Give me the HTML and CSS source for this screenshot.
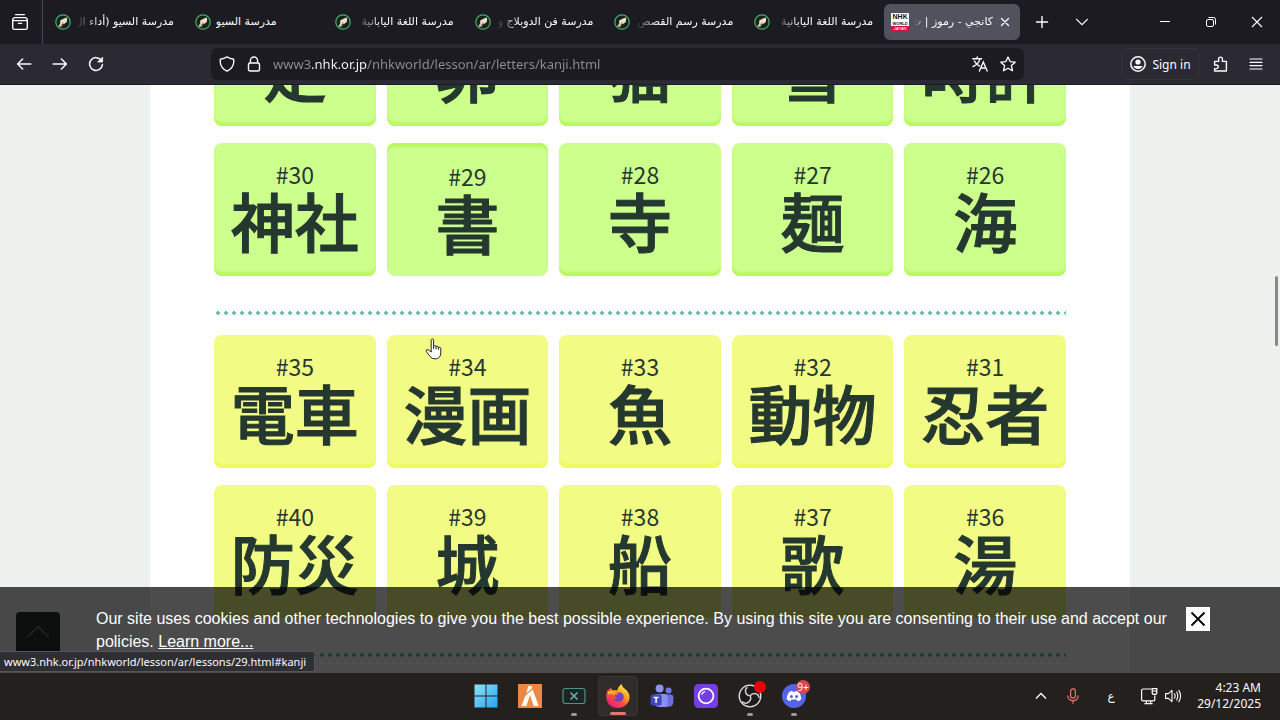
FILE: index.html
```html
<!DOCTYPE html>
<html lang="ar">
<head>
  <meta charset="UTF-8">
  <meta name="viewport" content="width=device-width, initial-scale=1.0">
  <title>كانجي - رموز</title>
  <link rel="stylesheet" href="styles.css">
</head>
<body>

  <!-- Shared icon shapes -->
  <svg class="defs" aria-hidden="true">
    <symbol id="school" viewBox="0 0 16 16">
      <circle cx="8" cy="8" r="7.2" fill="#14251c" stroke="#4fae6a" stroke-width="1.2"/>
      <path d="M11.4 3.4 L12.2 4.6 L11.8 8 L9.4 9.8 L7.4 10.6 L6.4 12.8 L3.2 12.4 L5.2 9.4 L5.2 6.6 L8 5 Z" fill="#f3dfca"/>
      <path d="M5.4 11.4 L7.4 10.4 L8.2 8.4" stroke="#6b5644" stroke-width="0.8" fill="none"/>
    </symbol>
  </svg>

  <header class="tab-bar">
    <button class="view-btn" aria-label="Recent browsing">
      <svg width="18" height="18" viewBox="0 0 18 18" fill="none" stroke="#fbfbfe" stroke-width="1.4" stroke-linecap="round">
        <path d="M4.6 1.6 H13.4 M1.7 7.4 Q1.7 4.6 4 4.6 H14 Q16.3 4.6 16.3 7.4"/>
        <path d="M1.7 7.6 H16.3 V14.8 Q16.3 16.4 14.6 16.4 H3.4 Q1.7 16.4 1.7 14.8 Z M7.4 10.4 H10.6"/>
      </svg>
    </button>
    <nav class="tabs">
      <a class="tab" href="#"><svg class="favicon"><use href="#school"/></svg><span class="tab-title fade">مدرسة السيو (أداء ال</span></a>
      <a class="tab" href="#"><svg class="favicon"><use href="#school"/></svg><span class="tab-title">مدرسة السيو</span></a>
      <a class="tab" href="#"><svg class="favicon"><use href="#school"/></svg><span class="tab-title fade">مدرسة اللغة اليابانية</span></a>
      <a class="tab" href="#"><svg class="favicon"><use href="#school"/></svg><span class="tab-title fade">مدرسة فن الدوبلاج و</span></a>
      <a class="tab" href="#"><svg class="favicon"><use href="#school"/></svg><span class="tab-title fade">مدرسة رسم القصص</span></a>
      <a class="tab" href="#"><svg class="favicon"><use href="#school"/></svg><span class="tab-title fade">مدرسة اللغة اليابانية</span></a>
      <div class="tab active">
        <span class="nhk"><b>NHK</b><b>WORLD</b><i>JAPAN</i></span>
        <span class="tab-title fade">كانجي - رموز | ت</span>
        <button class="tab-close" aria-label="Close tab">
          <svg width="10" height="10" viewBox="0 0 10 10" stroke="#fbfbfe" stroke-width="1.3" stroke-linecap="round"><path d="M1.5 1.5 L8.5 8.5 M8.5 1.5 L1.5 8.5"/></svg>
        </button>
      </div>
    </nav>
    <button class="bar-btn" aria-label="New tab">
      <svg width="14" height="14" viewBox="0 0 14 14" stroke="#fbfbfe" stroke-width="1.4" stroke-linecap="round"><path d="M7 1.5 V12.5 M1.5 7 H12.5"/></svg>
    </button>
    <button class="bar-btn" aria-label="List all tabs">
      <svg width="14" height="14" viewBox="0 0 14 14" fill="none" stroke="#fbfbfe" stroke-width="1.3" stroke-linecap="round"><path d="M1.6 4.4 L7 9.6 L12.4 4.4"/></svg>
    </button>
    <div class="window-btns">
      <button aria-label="Minimize"><svg width="12" height="12" viewBox="0 0 12 12" stroke="#fff"><path d="M1 5.5 H11"/></svg></button>
      <button aria-label="Restore"><svg width="12" height="12" viewBox="0 0 12 12" fill="none" stroke="#fff"><rect x="1.5" y="3.5" width="7" height="7" rx="1.5"/><path d="M3.5 1.5 H8.6 Q10.5 1.5 10.5 3.4 V8.5"/></svg></button>
      <button aria-label="Close"><svg width="12" height="12" viewBox="0 0 12 12" stroke="#fff" stroke-width="1.1"><path d="M1 1 L11 11 M11 1 L1 11"/></svg></button>
    </div>
  </header>

  <div class="nav-bar">
    <div class="nav-btns">
      <button aria-label="Back"><svg width="16" height="16" viewBox="0 0 16 16" fill="none" stroke="#fbfbfe" stroke-width="1.5" stroke-linecap="round" stroke-linejoin="round"><path d="M14.8 8 H1.6 M6.6 3 L1.6 8 L6.6 13"/></svg></button>
      <button aria-label="Forward"><svg width="16" height="16" viewBox="0 0 16 16" fill="none" stroke="#fbfbfe" stroke-width="1.5" stroke-linecap="round" stroke-linejoin="round"><path d="M1.2 8 H14.4 M9.4 3 L14.4 8 L9.4 13"/></svg></button>
      <button aria-label="Reload"><svg width="16" height="16" viewBox="0 0 16 16" fill="none" stroke="#fbfbfe" stroke-width="1.5" stroke-linecap="round" stroke-linejoin="round"><path d="M13.3 4.4 A6.4 6.4 0 1 0 14.4 8.6"/><path d="M14.6 1.4 V6 H10 Z" fill="#fbfbfe" stroke-width="0.8"/></svg></button>
    </div>
    <div class="url-bar">
      <svg width="16" height="16" viewBox="0 0 16 16" fill="none" stroke="#fbfbfe" stroke-width="1.4" stroke-linejoin="round"><path d="M8 0.9 Q11 2.8 14.7 3.2 V6.5 Q14.2 12.2 8 15.2 Q1.8 12.2 1.3 6.5 V3.2 Q5 2.8 8 0.9 Z"/></svg>
      <svg width="14" height="16" viewBox="0 0 14 16" fill="none" stroke="#fbfbfe" stroke-width="1.4"><rect x="1.5" y="7" width="11" height="8" rx="1.5"/><path d="M3.4 7 V4.6 A3.6 3.6 0 0 1 10.6 4.6 V7"/></svg>
      <input class="url" type="text" aria-label="Address" value="www3.nhk.or.jp/nhkworld/lesson/ar/letters/kanji.html">
      <button aria-label="Translate"><svg width="16" height="16" viewBox="0 0 16 16" fill="none" stroke="#fbfbfe" stroke-width="1.4" stroke-linecap="round"><path d="M0.8 2.8 H9.6 M5.2 1 V2.8 M8 2.8 Q7 7.6 1 10.6 M2.4 5 Q4 8.4 7.4 10 M7.4 15 L11.3 6 L15.2 15 M8.8 12 H13.8"/></svg></button>
      <button aria-label="Bookmark"><svg width="16" height="16" viewBox="0 0 16 16" fill="none" stroke="#fbfbfe" stroke-width="1.3" stroke-linejoin="round"><path d="M8 1 L10.1 5.6 L15.2 6.2 L11.4 9.6 L12.5 14.8 L8 12.2 L3.5 14.8 L4.6 9.6 L0.8 6.2 L5.9 5.6 Z"/></svg></button>
    </div>
    <div class="nav-right">
      <button class="sign-in">
        <svg width="16" height="16" viewBox="0 0 16 16"><circle cx="8" cy="8" r="7.2" fill="none" stroke="#fbfbfe" stroke-width="1.5"/><circle cx="8" cy="6" r="2.6" fill="#fbfbfe"/><path d="M3.4 10 H12.6 Q11.6 13 8 13 Q4.4 13 3.4 10 Z" fill="#fbfbfe"/></svg>
        Sign in
      </button>
      <button aria-label="Extensions"><svg width="16" height="16" viewBox="0 0 16 16" fill="none" stroke="#fbfbfe" stroke-width="1.4" stroke-linejoin="round"><path d="M2.6 5.4 H6.6 V3 A1.9 1.9 0 0 1 10.4 3 V5.4 H14.4 V15 H2.6 V12.6 H4.4 A1.8 1.8 0 0 0 4.4 9 H2.6 Z"/></svg></button>
      <button aria-label="Menu"><svg width="14" height="14" viewBox="0 0 14 14" stroke="#fbfbfe" stroke-width="1.2" stroke-linecap="round"><path d="M1 2 H13 M1 5.3 H13 M1 8.6 H13 M1 12 H13"/></svg></button>
    </div>
  </div>

  <div class="viewport">
    <main class="page">
      <div class="kanji-grid green first">
        <a class="card" href="#"><span class="num">#21</span><span class="kanji">時計</span></a>
        <a class="card" href="#"><span class="num">#22</span><span class="kanji">雪</span></a>
        <a class="card" href="#"><span class="num">#23</span><span class="kanji">猫</span></a>
        <a class="card" href="#"><span class="num">#24</span><span class="kanji">卵</span></a>
        <a class="card" href="#"><span class="num">#25</span><span class="kanji">足</span></a>
        <a class="card" href="#"><span class="num">#26</span><span class="kanji">海</span></a>
        <a class="card" href="#"><span class="num">#27</span><span class="kanji">麺</span></a>
        <a class="card" href="#"><span class="num">#28</span><span class="kanji">寺</span></a>
        <a class="card pressed" href="#"><span class="num">#29</span><span class="kanji">書</span></a>
        <a class="card" href="#"><span class="num">#30</span><span class="kanji">神社</span></a>
      </div>
      <div class="dots"></div>
      <div class="kanji-grid yellow">
        <a class="card" href="#"><span class="num">#31</span><span class="kanji">忍者</span></a>
        <a class="card" href="#"><span class="num">#32</span><span class="kanji">動物</span></a>
        <a class="card" href="#"><span class="num">#33</span><span class="kanji">魚</span></a>
        <a class="card" href="#"><span class="num">#34</span><span class="kanji">漫画</span></a>
        <a class="card" href="#"><span class="num">#35</span><span class="kanji">電車</span></a>
        <a class="card" href="#"><span class="num">#36</span><span class="kanji">湯</span></a>
        <a class="card" href="#"><span class="num">#37</span><span class="kanji">歌</span></a>
        <a class="card" href="#"><span class="num">#38</span><span class="kanji">船</span></a>
        <a class="card" href="#"><span class="num">#39</span><span class="kanji">城</span></a>
        <a class="card" href="#"><span class="num">#40</span><span class="kanji">防災</span></a>
      </div>
      <div class="dots"></div>
    </main>

    <div class="scroll-thumb"></div>

    <button class="to-top" aria-label="Back to top">
      <svg width="24" height="14" viewBox="0 0 24 14" fill="none" stroke="#b4c4b8"><path d="M1 12.5 L12 1.5 L23 12.5"/></svg>
    </button>

    <div class="cookie-bar">
      <p>Our site uses cookies and other technologies to give you the best possible experience. By using this site you are consenting to their use and accept our policies. <a href="#">Learn more...</a></p>
      <button aria-label="Close">
        <svg width="16" height="16" viewBox="0 0 16 16" stroke="#000" stroke-width="1.8"><path d="M1.5 1.5 L14.5 14.5 M14.5 1.5 L1.5 14.5"/></svg>
      </button>
    </div>

    <div class="status">www3.nhk.or.jp/nhkworld/lesson/ar/lessons/29.html#kanji</div>

    <svg class="pointer" width="18" height="22" viewBox="0 0 18 22"><path d="M6.2 14 V2.4 Q6.2 1 7.4 1 Q8.6 1 8.6 2.4 V8 Q9.8 7 10.9 8.4 Q12.2 7.6 13.2 9.2 Q15.6 8.6 15.8 10.8 V15 Q15.6 20.6 10.4 20.9 Q6.8 21 5 18.4 L1.2 13.4 Q0.9 11.4 3 11.6 L6.2 14" fill="#fff" stroke="#222" stroke-width="1"/><path d="M8.6 7.6 V11 M11 8.4 V11.4 M13.3 9.4 V11.8" stroke="#222" fill="none"/></svg>
  </div>

  <footer class="taskbar">
    <div class="apps">
      <button aria-label="Start">
        <svg width="24" height="24" viewBox="0 0 24 24">
          <defs><linearGradient id="win" x1="0" y1="0" x2="1" y2="1"><stop offset="0" stop-color="#8fe2fb"/><stop offset="1" stop-color="#23a5ee"/></linearGradient></defs>
          <path d="M0.5 0.5 H11.5 V11.5 H0.5 Z M12.5 0.5 H23.5 V11.5 H12.5 Z M0.5 12.5 H11.5 V23.5 H0.5 Z M12.5 12.5 H23.5 V23.5 H12.5 Z" fill="url(#win)"/>
        </svg>
      </button>
      <button aria-label="FiveM">
        <svg width="24" height="24" viewBox="0 0 24 24"><rect width="24" height="24" fill="#ee8743"/><path d="M10.2 2 H13.6 L14.2 4 L8.4 9.4 Z M14.6 5.4 L20.8 22 H15.6 L12 11 L8.4 22 H3.4 L7.4 11.8 Z" fill="#fff"/></svg>
      </button>
      <button class="open" aria-label="Terminal">
        <svg width="24" height="24" viewBox="0 0 24 24" fill="none" stroke="#4c9482"><rect x="1" y="4.5" width="22" height="15" rx="2.5" fill="#1b2624" stroke-width="1.2"/><path d="M8.5 8.5 L15.5 15.5 M15.5 8.5 L8.5 15.5" stroke="#6db8a4" stroke-width="1.5"/></svg>
      </button>
      <button class="open current" aria-label="Firefox">
        <svg width="26" height="26" viewBox="0 0 26 26">
          <defs>
            <linearGradient id="fox" x1="0.8" y1="0.05" x2="0.2" y2="0.95"><stop offset="0" stop-color="#fff44f"/><stop offset="0.35" stop-color="#ffa01f"/><stop offset="0.65" stop-color="#ff4a3f"/><stop offset="1" stop-color="#e01a7e"/></linearGradient>
          </defs>
          <path d="M16.5 1 Q17.2 4.4 20 6 Q23 8 24 11 Q25.6 16 22.6 20.2 Q19 25 13 25 Q6.6 25 3.2 20.4 Q0.4 16.4 1.4 10.8 Q1.8 8 3.4 5.8 L3.8 8 Q4.8 6.6 5.4 4.4 L7.4 7.2 Q10 6.4 12 7.6 Q13 3.6 16.5 1 Z" fill="url(#fox)"/>
          <path d="M12.8 9.4 Q16.8 8.6 18.4 11.8 Q19.8 17 15.6 18.6 Q10.6 20 8.4 15.8 Q10.4 16.4 12.2 14.8 Q9.6 14.6 9.6 12.4 L12.6 11.6 Z" fill="#7542c7"/>
          <path d="M3 9 Q7 6.4 11.6 9.6 Q9 10 8.8 11.8 Q5.6 9.6 3 12 Z" fill="#ffad35"/>
        </svg>
      </button>
      <button aria-label="Teams">
        <svg width="24" height="24" viewBox="0 0 24 24">
          <circle cx="18.6" cy="6.4" r="3" fill="#6f78e4"/><path d="M14 10.5 H21 Q23.4 10.5 23.4 13 V18 Q23 22.6 18.6 22.8 H14 Z" fill="#6c6fe0"/>
          <circle cx="9.6" cy="4.4" r="4" fill="#8b93f3"/><path d="M5 10 H15.4 Q17.6 10 17.6 12.4 V20.5 Q17.4 23 15 23 H9 Q4.6 22.4 4.6 18 Z" fill="#8d8df5"/>
          <rect x="0.6" y="10.6" width="11" height="11" rx="2" fill="#3d4ab8"/><path d="M3.6 13.5 H8.6 M6.1 13.5 V19" stroke="#fff" stroke-width="1.5"/>
        </svg>
      </button>
      <button aria-label="Camera">
        <svg width="24" height="24" viewBox="0 0 24 24"><rect width="24" height="24" rx="4.5" fill="#743ee4"/><circle cx="12" cy="12" r="7.4" fill="none" stroke="#fff" stroke-width="1.8"/><path d="M7.8 10.4 Q8.6 8.4 10.6 7.6" stroke="#fff" stroke-width="1.2" fill="none" stroke-linecap="round"/></svg>
      </button>
      <button class="open" aria-label="OBS Studio">
        <svg width="24" height="24" viewBox="0 0 24 24"><circle cx="12" cy="12" r="10.8" fill="#1d1a1b" stroke="#e4e2e2" stroke-width="1.3"/><path d="M12.2 11.8 Q7.6 11.6 7.4 6.2 Q7.8 4.2 9.6 3.4 M12.2 11.8 Q15 8 19.6 10.6 Q21 12 21 14 M12.2 11.8 Q14.2 16.4 9.2 19 Q6 19.6 4 17.6" fill="none" stroke="#cfcdcd" stroke-width="1.5"/></svg>
        <span class="rec-dot"></span>
      </button>
      <button class="open" aria-label="Discord">
        <svg width="24" height="24" viewBox="0 0 24 24"><circle cx="12" cy="12" r="12" fill="#5562ea"/><path d="M8.2 7.4 L10 6.8 L10.6 7.8 H13.4 L14 6.8 L15.8 7.4 Q18.4 8 19.4 15 Q18 17 15.6 17.2 L14.6 15.6 H9.4 L8.4 17.2 Q6 17 4.6 15 Q5.6 8 8.2 7.4 Z" fill="#fff"/><circle cx="9.4" cy="12.4" r="1.5" fill="#5562ea"/><circle cx="14.6" cy="12.4" r="1.5" fill="#5562ea"/></svg>
        <span class="badge">9+</span>
      </button>
    </div>
    <div class="tray">
      <button aria-label="Show hidden icons"><svg width="12" height="12" viewBox="0 0 12 12" fill="none" stroke="#fff" stroke-width="1.3"><path d="M1 8.5 L6 3.5 L11 8.5"/></svg></button>
      <button aria-label="Microphone"><svg width="12" height="16" viewBox="0 0 12 16" fill="none" stroke="#e5786d" stroke-width="1.2"><rect x="3.6" y="0.8" width="4.8" height="9.4" rx="2.4"/><path d="M0.8 7.4 Q1 12.6 6 12.6 Q11 12.6 11.2 7.4 M6 12.6 V15.8"/></svg></button>
      <button class="lang">ع</button>
      <button class="system" aria-label="Network and volume">
        <svg width="18" height="18" viewBox="0 0 18 18" fill="none" stroke="#fff" stroke-width="1.2"><path d="M11.5 2 H3 Q1.6 2 1.6 3.4 V12.4 Q1.6 13.8 3 13.8 H13.4 Q14.8 13.8 14.8 12.4 V8.4 M6.4 13.8 V16.4 M10.6 13.8 V16.4 M4.4 16.6 H12.6"/><path d="M12.2 1.6 H16.8 V5.4 Q16.8 7.4 14.5 7.4 Q12.2 7.4 12.2 5.4 Z M12.2 4 H16.8"/></svg>
        <svg width="18" height="18" viewBox="0 0 18 18" fill="none" stroke="#fff" stroke-width="1.1" stroke-linejoin="round" stroke-linecap="round"><path d="M1.6 6.6 H4.4 L8 3.4 V14.6 L4.4 11.4 H1.6 Z M10.4 6.8 Q11.8 9 10.4 11.2 M12.6 5 Q15 9 12.6 13 M14.8 3.4 Q18.4 9 14.8 14.6"/></svg>
      </button>
      <div class="clock"><span>4:23 AM</span><span>29/12/2025</span></div>
    </div>
  </footer>

</body>
</html>
```
FILE: styles.css
```css
* {
  box-sizing: border-box;
}
body {
  margin: 0;
  height: 100vh;
  display: flex;
  flex-direction: column;
  overflow: hidden;
  font-family: "Noto Sans", "DejaVu Sans", sans-serif;
  font-size: 12px;
  color: #fbfbfe;
  background-color: #24201e;
}
button {
  display: flex;
  align-items: center;
  justify-content: center;
  padding: 0;
  border: none;
  background: none;
  color: inherit;
  font: inherit;
  cursor: pointer;
}
svg {
  flex-shrink: 0;
}
.defs {
  position: absolute;
  width: 0;
  height: 0;
}

/* Tab bar */
.tab-bar {
  height: 44px;
  flex-shrink: 0;
  display: flex;
  align-items: center;
  background-color: #1c1b22;
}
.view-btn {
  width: 43px;
  height: 44px;
  padding-right: 2px;
  border-right: 1px solid #46454d;
}
.tabs {
  flex: 1;
  display: flex;
  min-width: 0;
}
.tab {
  flex: 1 1 0;
  min-width: 0;
  height: 36px;
  display: flex;
  align-items: center;
  gap: 5px;
  padding: 0 9px 0 12px;
  color: #fbfbfe;
  text-decoration: none;
}
.tab.active {
  margin: 0 2px;
  padding: 0 10px 0 7px;
  border-radius: 6px;
  background-color: #52525e;
}
.favicon {
  width: 16px;
  height: 16px;
}
.tab-title {
  direction: rtl;
  overflow: hidden;
  white-space: nowrap;
  font-family: "DejaVu Sans", sans-serif;
  font-size: 11px;
  line-height: 20px;
}
.tab-title.fade {
  flex: 1;
  mask-image: linear-gradient(to right, transparent, #000 24px);
}
.tab.active .tab-title {
  mask-image: linear-gradient(to right, transparent, #000 12px);
}
.tab-close {
  margin-left: 2px;
}
.nhk {
  width: 18px;
  height: 18px;
  flex-shrink: 0;
  display: flex;
  flex-direction: column;
  align-items: center;
  background-color: #fff;
  color: #111;
  font-family: "Liberation Sans", sans-serif;
  font-size: 7px;
  line-height: 8px;
}
.nhk b + b {
  font-size: 4px;
  line-height: 5px;
}
.nhk i {
  width: 100%;
  text-align: center;
  font-size: 4px;
  line-height: 5px;
  color: #fff;
  background-color: #d8103a;
}
.bar-btn {
  width: 40px;
  height: 36px;
}
.window-btns {
  display: flex;
  margin-left: 40px;
}
.window-btns button {
  width: 46px;
  height: 44px;
}

/* Navigation bar */
.nav-bar {
  height: 41px;
  flex-shrink: 0;
  display: grid;
  grid-template-columns: 211px 1fr 256px;
  align-items: center;
  background-color: #2b2a33;
  border-bottom: 1px solid #1c1b22;
}
.nav-btns {
  display: flex;
  padding-left: 6px;
}
.nav-btns button,
.nav-right button {
  width: 36px;
  height: 32px;
}
.url-bar {
  height: 32px;
  display: flex;
  align-items: center;
  gap: 12px;
  padding: 0 8px;
  border-radius: 6px;
  background-color: #1c1b22;
}
.url {
  flex: 1;
  min-width: 0;
  height: 24px;
  padding: 0;
  border: none;
  outline: none;
  font-family: "Noto Sans", sans-serif;
  font-size: 13px;
  color: transparent;
  /* only the domain is bright */
  background: linear-gradient(to right, #8f8e96 39px, #fbfbfe 39px, #fbfbfe 94px, #8f8e96 94px);
  -webkit-background-clip: text;
  background-clip: text;
}
.nav-right {
  display: flex;
  justify-content: flex-end;
  padding-right: 6px;
}
.nav-right .sign-in {
  width: 77px;
  gap: 6px;
  margin-right: 3px;
  border: 1px solid #34333d;
  border-radius: 6px;
}

/* Lesson page */
.viewport {
  flex: 1;
  min-height: 0;
  position: relative;
  overflow: hidden;
  background-color: #edf2ee;
}
.page {
  display: flow-root;
  max-width: 980px;
  height: 100%;
  margin: 0 auto;
  padding: 0 64px;
  background-color: #fff;
}
.kanji-grid {
  display: grid;
  grid-template-columns: repeat(5, 1fr);
  gap: 17px 11px;
  direction: rtl;
}
/* the list is scrolled part of the way down */
.kanji-grid.first {
  margin-top: -92px;
}
.card {
  height: 133px;
  display: flex;
  flex-direction: column;
  align-items: center;
  padding-top: 18px;
  border-radius: 8px;
  direction: ltr;
  color: #25382f;
  text-decoration: none;
  font-family: "Noto Sans CJK JP", sans-serif;
}
.green .card {
  background-color: #ccff8c;
  box-shadow: inset 0 -4px 2px #b9f95f;
}
.green .card.pressed {
  padding-top: 20px;
  box-shadow: inset 0 4px 2px #b9f95f;
}
.yellow .card {
  background-color: #f2fc84;
  box-shadow: inset 0 -4px 2px #eefb5e;
}
.num {
  font-size: 23px;
  line-height: 26px;
}
.kanji {
  font-size: 64px;
  line-height: 64px;
  font-weight: 500;
  -webkit-text-stroke: 1px #25382f;
}
.dots {
  height: 4px;
  margin: 35px 0 20px;
  background: radial-gradient(circle, #6cc5a3 2px, transparent 2px) 0 0 / 8px 4px repeat-x;
}
.scroll-thumb {
  position: absolute;
  top: 191px;
  right: 2px;
  width: 3px;
  height: 70px;
  border-radius: 2px;
  background-color: #85898a;
}
.to-top {
  position: absolute;
  left: 16px;
  bottom: 17px;
  width: 44px;
  height: 44px;
  padding-bottom: 4px;
  border-radius: 4px;
  background-color: #25382f;
}
.cookie-bar {
  position: absolute;
  left: 0;
  right: 0;
  bottom: 0;
  height: 86px;
  display: flex;
  align-items: flex-start;
  padding: 20px 70px 0 96px;
  background-color: rgba(0, 0, 0, 0.7);
  font-family: "Liberation Sans", Arial, sans-serif;
  font-size: 16px;
  line-height: 23px;
  color: #fff;
}
.cookie-bar p {
  flex: 1;
  margin: 0 16px 0 0;
}
.cookie-bar a {
  color: #fff;
}
.cookie-bar button {
  width: 24px;
  height: 24px;
  background-color: #fff;
}
.status {
  position: absolute;
  left: 0;
  bottom: 1px;
  height: 21px;
  padding: 0 8px 0 4px;
  border: 1px solid #56555c;
  border-left: none;
  background-color: #2f2e33;
  font-size: 11px;
  line-height: 20px;
}
.pointer {
  position: absolute;
  left: 425px;
  top: 253px;
}

/* Taskbar */
.taskbar {
  height: 47px;
  flex-shrink: 0;
  display: grid;
  grid-template-columns: 1fr auto 1fr;
  align-items: center;
  padding-bottom: 2px;
  background-color: #24201e;
}
.apps {
  grid-column: 2;
  display: flex;
  gap: 4px;
}
.apps button {
  position: relative;
  width: 40px;
  height: 40px;
  border-radius: 4px;
}
.apps .current {
  background-color: #302c2a;
  border: 1px solid #3a3634;
}
.open::after {
  content: "";
  position: absolute;
  bottom: 0;
  left: 50%;
  width: 6px;
  height: 3px;
  margin-left: -3px;
  border-radius: 2px;
  background-color: #9a9795;
}
.current::after {
  width: 16px;
  margin-left: -8px;
  background-color: #e07a68;
}
.rec-dot {
  position: absolute;
  top: 5px;
  right: 4px;
  width: 12px;
  height: 12px;
  border-radius: 50%;
  background-color: #e60000;
}
.badge {
  position: absolute;
  top: 4px;
  right: 4px;
  width: 14px;
  height: 14px;
  border-radius: 50%;
  background-color: #d64550;
  font-size: 10px;
  line-height: 14px;
  text-align: center;
}
.tray {
  display: flex;
  align-items: center;
  justify-content: flex-end;
  padding-right: 19px;
}
.tray button {
  width: 32px;
  height: 40px;
}
.tray .lang {
  width: 44px;
  font-family: "DejaVu Sans", sans-serif;
}
.tray .system {
  width: 56px;
  gap: 6px;
}
.clock {
  display: flex;
  flex-direction: column;
  width: 72px;
  text-align: right;
  line-height: 16px;
}
```
